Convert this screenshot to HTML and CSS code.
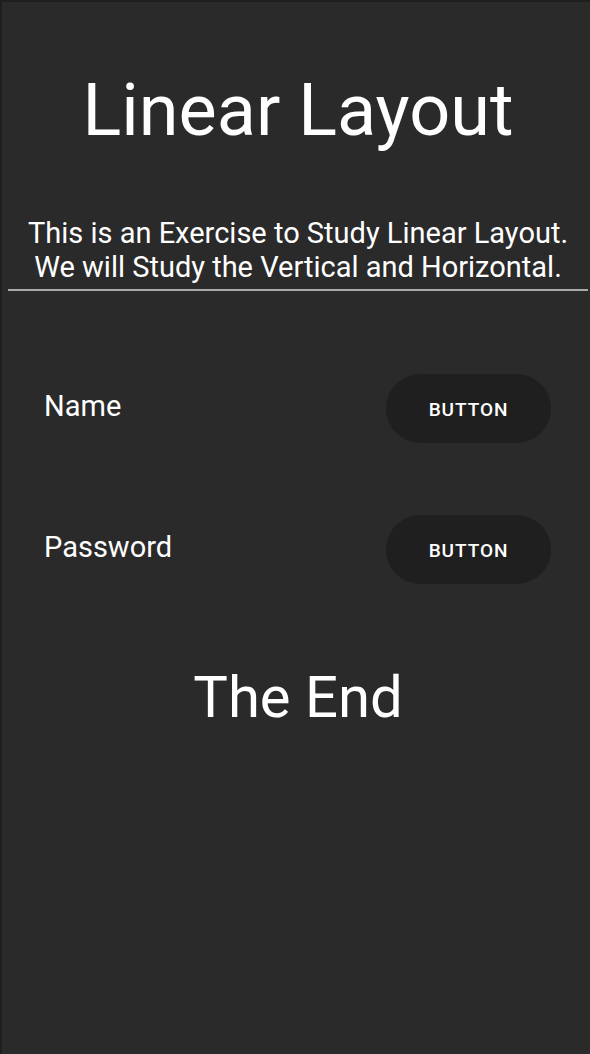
FILE: index.html
```html
<!DOCTYPE html>
<html>
<head>
<meta charset="utf-8">
<link rel="stylesheet" href="styles.css">
</head>
<body>
<div class="screen">
  <div class="content">
    <h1 class="title">Linear Layout</h1>
    <p class="subtitle">This is an Exercise to Study Linear Layout.<br>We will Study the Vertical and Horizontal.</p>
    <div class="divider"></div>
    <div class="row row-first">
      <span class="label">Name</span>
      <span class="button">BUTTON</span>
    </div>
    <div class="row row-second">
      <span class="label">Password</span>
      <span class="button">BUTTON</span>
    </div>
    <p class="end">The End</p>
  </div>
</div>
</body>
</html>
```
FILE: styles.css
```css
html, body {
  margin: 0;
  padding: 0;
  background: #2a2a2a;
}
body {
  font-family: Roboto, "Noto Sans", sans-serif;
  color: #ffffff;
}
.screen {
  width: 590px;
  height: 1054px;
  box-sizing: border-box;
  border-top: 2px solid #1e1e1e;
  border-left: 2px solid #1e1e1e;
  background: #2a2a2a;
  overflow: hidden;
}
.content {
  padding: 0 2px 0 6px;
  display: flex;
  flex-direction: column;
}
.title {
  margin: 67px 0 0;
  font-size: 72px;
  font-weight: 400;
  line-height: 84px;
  text-align: center;
}
.subtitle {
  margin: 63px 0 0;
  font-size: 29px;
  line-height: 34px;
  text-align: center;
}
.divider {
  margin-top: 5px;
  height: 2px;
  background: #a9a9a9;
}
.row {
  display: flex;
  align-items: baseline;
  justify-content: space-between;
  padding: 0 37px 0 36px;
}
.row-first {
  margin-top: 83px;
}
.row-second {
  margin-top: 72px;
}
.label {
  font-size: 29px;
  line-height: normal;
}
.button {
  display: inline-flex;
  align-items: center;
  justify-content: center;
  width: 165px;
  height: 69px;
  border-radius: 35px;
  background: #1f1f1f;
  font-size: 19px;
  font-weight: 500;
  letter-spacing: 0.05em;
  padding-top: 2px;
  box-sizing: border-box;
}
.end {
  margin: 79px 0 0;
  font-size: 58px;
  line-height: 68px;
  text-align: center;
}
```
